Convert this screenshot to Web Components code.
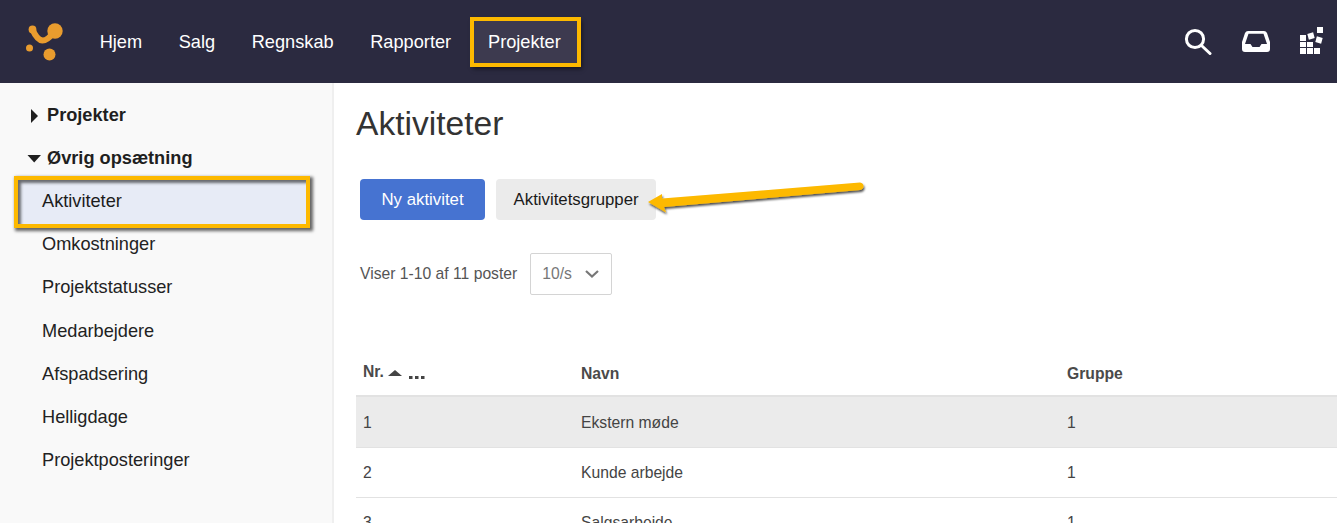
<!DOCTYPE html>
<html lang="da">
<head>
<meta charset="utf-8">
<title>Aktiviteter</title>
<style>
  html, body { margin: 0; height: 523px; overflow: hidden; background: #fff; }
  body { font-family: "Liberation Sans", Arial, sans-serif; position: relative; }
  .page { display: flex; height: 440px; }
</style>
</head>
<body>
<app-header></app-header>
<div class="page">
  <side-menu></side-menu>
  <activity-page></activity-page>
</div>

<script>
class NavItem extends HTMLElement {
  constructor() {
    super()
    this.attachShadow({ mode: 'open' })
    this.shadowRoot.innerHTML = `
      <style>
        :host {
          display: flex;
          align-items: center;
          height: 40px;
          padding: 2px 18.3px 0;
          font-size: 18.2px;
          color: #fff;
        }
        :host([active]) {
          padding: 2px 16px 0 14px;
          margin-left: 4.6px;
          background: #3d3a4f;
          outline: 4px solid #fdb900;
          box-shadow: 2px 3px 4px 3px rgba(0, 0, 0, .5);
        }
      </style>
      <slot></slot>
    `
  }
}

class AppHeader extends HTMLElement {
  constructor() {
    super()
    this.attachShadow({ mode: 'open' })
    this.shadowRoot.innerHTML = `
      <style>
        :host {
          display: flex;
          align-items: center;
          height: 83px;
          background: #2b2a40;
        }
        .logo { width: 46px; height: 46px; margin-left: 22px; margin-right: 13.4px; flex: none; }
        nav { display: flex; align-items: center; }
        .tools { margin-left: auto; display: flex; align-items: center; gap: 30px; padding-right: 13px; }
        .grid { margin-bottom: 3px; }
        svg { display: block; }
      </style>
      <svg class="logo" viewBox="22 18 46 46">
        <g fill="#e99c2e">
          <circle cx="55" cy="30" r="7.7"/>
          <circle cx="32.5" cy="28.5" r="3.9"/>
          <circle cx="29.5" cy="47" r="3.5"/>
          <circle cx="49.5" cy="53.5" r="6"/>
          <path d="M32.5 28.5 Q37 39 42.5 39.5 Q47.5 39.5 53 32" fill="none" stroke="#e99c2e" stroke-width="6" stroke-linecap="round"/>
        </g>
      </svg>
      <nav>
        <nav-item>Hjem</nav-item>
        <nav-item>Salg</nav-item>
        <nav-item>Regnskab</nav-item>
        <nav-item>Rapporter</nav-item>
        <nav-item active>Projekter</nav-item>
      </nav>
      <div class="tools">
        <svg width="28" height="28" viewBox="0 0 28 28" fill="none" stroke="#fff" stroke-width="3" stroke-linecap="round">
          <circle cx="11" cy="11" r="8.6"/>
          <path d="M17.5 17.5 L26 25.5"/>
        </svg>
        <svg width="28" height="22" viewBox="0 0 28 22">
          <path fill="#fff" fill-rule="evenodd" d="M6 0 H22 Q24 0 25 2 L28 11 V18 Q28 21 25 21 H3 Q0 21 0 18 V11 L3 2 Q4 0 6 0 Z M6.5 2.8 L3 13 H8.5 L10.5 16 H17.5 L19.5 13 H25 L21.5 2.8 Z"/>
        </svg>
        <svg class="grid" width="24" height="27" viewBox="0 0 24 27" fill="#fff">
          <rect x="0" y="15" width="6" height="5"/>
          <rect x="7" y="15" width="6" height="5"/>
          <rect x="0" y="21" width="6" height="6"/>
          <rect x="7" y="21" width="6" height="6"/>
          <rect x="14" y="21" width="6" height="6"/>
          <rect x="0" y="8" width="6" height="6"/>
          <rect x="8" y="6" width="6" height="6" transform="rotate(-15 11 9)"/>
          <rect x="17" y="0" width="6" height="6"/>
          <rect x="16" y="10" width="6" height="6" transform="rotate(15 19 13)"/>
        </svg>
      </div>
    `
  }
}

class MenuGroup extends HTMLElement {
  constructor() {
    super()
    this.attachShadow({ mode: 'open' })
    this.shadowRoot.innerHTML = `
      <style>
        :host {
          display: flex;
          align-items: center;
          height: 43px;
          padding-left: 30px;
          font-size: 18.2px;
          font-weight: 700;
          color: #1f1f1f;
        }
        .caret { width: 15px; height: 14px; margin-right: 2px; overflow: visible; }
        svg { display: block; fill: #1f1f1f; }
      </style>
      <svg class="caret" viewBox="0 0 15 14"><path d="${this.hasAttribute('open') ? 'M-2.5 3 H11 L4.2 10.5 Z' : 'M1 0 L8 7 L1 14 Z'}"/></svg>
      <slot></slot>
    `
  }
}

class MenuLink extends HTMLElement {
  constructor() {
    super()
    this.attachShadow({ mode: 'open' })
    this.shadowRoot.innerHTML = `
      <style>
        :host {
          display: flex;
          align-items: center;
          height: 43.2px;
          padding-left: 42px;
          font-size: 18.2px;
          color: #222;
          position: relative;
        }
        :host([active]) { color: #1c1c1c; }
        .mark {
          display: none;
          position: absolute;
          left: 14px;
          top: -4px;
          width: 288px;
          height: 44px;
          border: 4px solid #fdb900;
          background: #e7ebf6;
          box-shadow: 2px 2px 3px 1px rgba(0, 0, 0, .6), inset 3px 3px 3px rgba(0, 0, 0, .55);
        }
        :host([active]) .mark { display: block; }
        span { position: relative; }
      </style>
      <div class="mark"></div>
      <span><slot></slot></span>
    `
  }
}

class SideMenu extends HTMLElement {
  constructor() {
    super()
    this.attachShadow({ mode: 'open' })
    this.shadowRoot.innerHTML = `
      <style>
        :host {
          display: block;
          box-sizing: border-box;
          flex: none;
          width: 334px;
          padding-top: 11px;
          background: #f9f9f9;
          border-right: 2px solid #efefef;
        }
      </style>
      <menu-group>Projekter</menu-group>
      <menu-group open>Øvrig opsætning</menu-group>
      <menu-link active>Aktiviteter</menu-link>
      <menu-link>Omkostninger</menu-link>
      <menu-link>Projektstatusser</menu-link>
      <menu-link>Medarbejdere</menu-link>
      <menu-link>Afspadsering</menu-link>
      <menu-link>Helligdage</menu-link>
      <menu-link>Projektposteringer</menu-link>
    `
  }
}

class UiButton extends HTMLElement {
  constructor() {
    super()
    this.attachShadow({ mode: 'open' })
    this.shadowRoot.innerHTML = `
      <style>
        :host {
          display: inline-flex;
          align-items: center;
          justify-content: center;
          box-sizing: border-box;
          height: 41px;
          border-radius: 4px;
          font-size: 16.8px;
          background: #ebebeb;
          color: #1a1a1a;
          padding: 1px 17.5px 0;
        }
        :host([primary]) { background: #4673d1; color: #fff; padding: 1px 21.5px 0; }
      </style>
      <slot></slot>
    `
  }
}

class PageSize extends HTMLElement {
  constructor() {
    super()
    this.attachShadow({ mode: 'open' })
    this.shadowRoot.innerHTML = `
      <style>
        :host {
          display: flex;
          align-items: center;
          box-sizing: border-box;
          width: 82px;
          height: 42px;
          padding-left: 11px;
          gap: 13px;
          border: 1px solid #d4d4d4;
          border-radius: 2px;
          font-size: 15.7px;
          color: #777;
        }
        svg { display: block; }
      </style>
      <slot></slot>
      <svg width="14" height="8" viewBox="0 0 14 8" fill="none" stroke="#777" stroke-width="2.2"><path d="M1 1 L7 6.5 L13 1"/></svg>
    `
  }
}

class DataRow extends HTMLElement {
  constructor() {
    super()
    this.attachShadow({ mode: 'open' })
    this.shadowRoot.innerHTML = `
      <style>
        :host {
          display: grid;
          grid-template-columns: 218px 486px 1fr;
          align-items: center;
          box-sizing: border-box;
          height: 50px;
          padding-left: 7px;
          font-size: 15.7px;
          color: #444;
          border-bottom: 1px solid #e2e2e2;
        }
        :host([hover]) { background: #ebebeb; height: 51px; padding-top: 2px; }
        :host([head]) {
          height: 44px;
          font-weight: 700;
          color: #4a4a4a;
          border-bottom: 2px solid #e2e2e2;
        }
      </style>
      <slot></slot>
    `
  }
}

class ActivityPage extends HTMLElement {
  constructor() {
    super()
    this.attachShadow({ mode: 'open' })
    this.shadowRoot.innerHTML = `
      <style>
        :host {
          display: block;
          flex: 1;
          min-width: 0;
          padding-left: 22px;
          position: relative;
        }
        h1 {
          margin: 0;
          padding-top: 22px;
          height: 75px;
          box-sizing: border-box;
          font-size: 33.6px;
          font-weight: 400;
          line-height: 38px;
          color: #333;
        }
        .actions { display: flex; gap: 11px; padding: 21px 0 0 4px; }
        .paging {
          display: flex;
          align-items: center;
          gap: 13px;
          margin-top: 33px;
          padding-left: 4px;
          font-size: 15.7px;
          color: #555;
        }
        .table { margin-top: 58px; }
        .sort { display: inline-flex; align-items: center; gap: 4px; margin-top: -4px; }
        .sort svg { display: block; }
        .sort .up { margin-top: 3px; }
        .sort .more { margin: 9px 0 0 3px; }
        .arrow { position: absolute; left: 300px; top: 90px; overflow: visible; }
      </style>
      <h1>Aktiviteter</h1>
      <div class="actions">
        <ui-button primary>Ny aktivitet</ui-button>
        <ui-button>Aktivitetsgrupper</ui-button>
      </div>
      <div class="paging">
        <span>Viser 1-10 af 11 poster</span>
        <page-size>10/s</page-size>
      </div>
      <div class="table">
        <data-row head>
          <span class="sort">Nr.
            <svg class="up" width="14" height="7" viewBox="0 0 14 7" fill="#444"><path d="M7 0 L14 6 H0 Z"/></svg>
            <svg class="more" width="16" height="4" viewBox="0 0 16 4" fill="#444"><rect y="1" width="3.5" height="3"/><rect x="6" y="1" width="3.5" height="3"/><rect x="12" y="1" width="3.5" height="3"/></svg>
          </span>
          <span>Navn</span>
          <span>Gruppe</span>
        </data-row>
        <data-row hover><span>1</span><span>Ekstern møde</span><span>1</span></data-row>
        <data-row><span>2</span><span>Kunde arbejde</span><span>1</span></data-row>
        <data-row><span>3</span><span>Salgsarbejde</span><span>1</span></data-row>
      </div>
      <svg class="arrow" width="240" height="60" viewBox="0 0 240 60">
        <defs>
          <filter id="s" x="-10%" y="-40%" width="120%" height="200%">
            <feDropShadow dx="1" dy="2" stdDeviation="1.2" flood-color="#000" flood-opacity=".7"/>
          </filter>
        </defs>
        <path filter="url(#s)" fill="#fdb900" d="M14 29 L28 21 L28 25.5 L226 9.5 Q229.5 10 229.5 13 Q229.5 16.5 226 17 L30 34 L32 39.6 Z"/>
      </svg>
    `
  }
}

customElements.define('nav-item', NavItem)
customElements.define('app-header', AppHeader)
customElements.define('menu-group', MenuGroup)
customElements.define('menu-link', MenuLink)
customElements.define('side-menu', SideMenu)
customElements.define('ui-button', UiButton)
customElements.define('page-size', PageSize)
customElements.define('data-row', DataRow)
customElements.define('activity-page', ActivityPage)
</script>
</body>
</html>
